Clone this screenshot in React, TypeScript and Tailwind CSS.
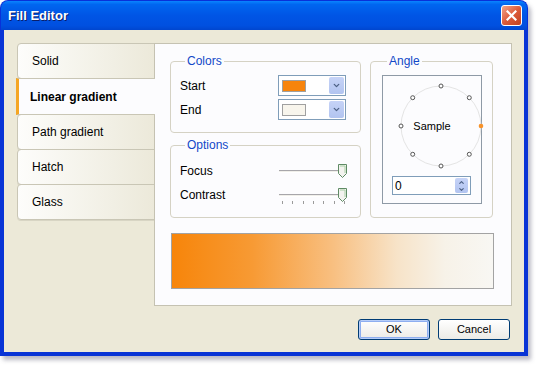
import { ChevronDown, ChevronUp } from "lucide-react";

const TABS = ["Solid", "Linear gradient", "Path gradient", "Hatch", "Glass"];

function ColorCombo({ color }: { color: string }) {
  return (
    <div className="flex h-[21px] w-[68px] items-center border border-[#7F9DB9] bg-white pl-[3px] pr-[1px]">
      <div className="h-[12px] w-[24px] border border-[#A0A0A0]" style={{ backgroundColor: color }} />
      <div className="flex-1" />
      <div className="grid h-[17px] w-[15px] place-items-center rounded-[2px] bg-gradient-to-b from-[#C6D3F7] to-[#B2C4F0] text-[#4D6185]">
        <ChevronDown className="h-[9px] w-[9px]" strokeWidth={3.5} />
      </div>
    </div>
  );
}

function Slider() {
  return (
    <div className="relative h-[14px] w-[70px]">
      <div className="absolute left-[2px] right-[4px] top-[6px] h-[3px] border-t border-[#A7A6AA] border-b border-b-white bg-[#F0EFEA]" />
      <svg className="absolute right-0 top-0" width="9" height="14" viewBox="0 0 9 14">
        <path d="M0.5 0.5 H8.5 V9.5 L4.5 13.5 L0.5 9.5 Z" fill="#F3F3EF" stroke="#5F8B65" />
        <path d="M2 2 H7 V9" fill="none" stroke="#A8CFA5" />
      </svg>
    </div>
  );
}

function AngleDial() {
  const cx = 50;
  const cy = 50;
  const r = 40;
  const dots = [0, 45, 90, 135, 180, 225, 270, 315];
  return (
    <div className="relative h-[100px] w-full">
      <svg width="100" height="100" viewBox="0 0 100 100" className="absolute left-[-1px] top-0">
        <circle cx={cx} cy={cy} r={r} fill="none" stroke="#E4E4E4" strokeWidth="1" />
        {dots.map((a) => {
          const rad = (a * Math.PI) / 180;
          const x = cx + r * Math.cos(rad);
          const y = cy - r * Math.sin(rad);
          return a === 0 ? (
            <circle key={a} cx={x} cy={y} r="2.3" fill="#F7922A" />
          ) : (
            <circle key={a} cx={x} cy={y} r="2" fill="white" stroke="#555" strokeWidth="1" />
          );
        })}
      </svg>
      <div className="absolute inset-0 flex items-center justify-center text-[11px] text-black">
        Sample
      </div>
    </div>
  );
}

function XPButton({ label, isDefault }: { label: string; isDefault?: boolean }) {
  return (
    <button
      type="button"
      className={
        "h-[21px] w-[72px] rounded-[3px] border border-[#003C74] bg-gradient-to-b from-white to-[#ECEBE6] text-[11px] text-black " +
        (isDefault ? "shadow-[inset_0_0_0_1px_#B6CDF8,inset_0_0_0_2px_#8EAEF0]" : "")
      }
    >
      {label}
    </button>
  );
}

export default function App() {
  return (
    <div className="h-[365px] w-[536px] bg-white font-['Liberation_Sans',Tahoma,sans-serif]">
      <div className="flex h-[356px] w-[528px] flex-col rounded-t-[8px] shadow-[3px_4px_4px_rgba(60,60,90,0.35)]">
        {/* title bar */}
        <div className="flex h-[30px] items-center justify-between rounded-t-[8px] border border-b-0 border-[#0831D9] bg-[linear-gradient(to_bottom,#0A84FF_0%,#0066F0_12%,#0055E5_50%,#0050E0_85%,#0046CF_100%)] pl-[7px] pr-[5px]">
          <span className="text-[13px] font-bold text-white [text-shadow:1px_1px_0_#0A1E6A]">
            Fill Editor
          </span>
          <div className="grid h-[21px] w-[21px] place-items-center rounded-[3px] border border-white bg-gradient-to-br from-[#F0A38A] via-[#DD5B3A] to-[#C2411F]">
            <svg width="11" height="11" viewBox="0 0 11 11">
              <path d="M1.5 1.5 L9.5 9.5 M9.5 1.5 L1.5 9.5" stroke="white" strokeWidth="2.2" strokeLinecap="square" />
            </svg>
          </div>
        </div>

        {/* body */}
        <div className="flex flex-1 flex-col border-x-4 border-b-4 border-[#0834D6] bg-[#ECE9D8] pl-[12px] pt-[13px]">
          <div className="flex">
            {/* tab list */}
            <div className="mt-[1px] flex w-[139px] flex-col">
              {TABS.map((t) =>
                t === "Linear gradient" ? (
                  <div
                    key={t}
                    className="relative z-10 -mt-px flex h-[37px] w-[139px] items-center border-y border-l-[3px] border-y-[#C9C6B5] border-l-[#F5A623] bg-[#FCFCFE] pl-[11px] text-[12px] font-bold text-black"
                  >
                    {t}
                  </div>
                ) : (
                  <div
                    key={t}
                    className="-mt-px ml-[1px] flex h-[36px] w-[138px] items-center rounded-l-[4px] border border-[#C9C6B5] bg-gradient-to-r from-[#FDFDFB] to-[#ECE9DA] pl-[14px] text-[12px] text-black shadow-[0_1px_0_#D8D5C4]"
                  >
                    {t}
                  </div>
                ),
              )}
            </div>

            {/* main panel */}
            <div className="-ml-px flex h-[263px] w-[358px] flex-col border border-[#C5C2B2] bg-[#FCFCFE] pl-[15px] pt-[11px]">
              <div className="flex gap-[9px]">
                <div className="flex w-[191px] flex-col gap-[6px]">
                  <fieldset className="h-[78px] rounded-[4px] border border-[#D5D2C4] pl-[9px] pr-[14px]">
                    <legend className="ml-[5px] px-[2px] text-[12px] leading-[13px] text-[#1248C8]">Colors</legend>
                    <div className="mt-[7px] flex items-center justify-between text-[12px] text-black">
                      <span>Start</span>
                      <ColorCombo color="#F7840C" />
                    </div>
                    <div className="mt-[3px] flex items-center justify-between text-[12px] text-black">
                      <span>End</span>
                      <ColorCombo color="#F8F5EC" />
                    </div>
                  </fieldset>
                  <fieldset className="h-[79px] rounded-[4px] border border-[#D5D2C4] pl-[9px] pr-[13px]">
                    <legend className="ml-[5px] px-[2px] text-[12px] leading-[13px] text-[#1248C8]">Options</legend>
                    <div className="mt-[12px] flex h-[14px] items-center justify-between text-[12px] leading-[14px] text-black">
                      <span>Focus</span>
                      <Slider />
                    </div>
                    <div className="mt-[10px] flex h-[14px] items-center justify-between text-[12px] leading-[14px] text-black">
                      <span>Contrast</span>
                      <Slider />
                    </div>
                    <div className="ml-[102px] mt-[-1px] flex w-[63px] justify-between">
                      {Array.from({ length: 7 }).map((_, i) => (
                        <div key={i} className="h-[3px] w-px bg-[#9A9A9A]" />
                      ))}
                    </div>
                  </fieldset>
                </div>

                <fieldset className="h-[163px] w-[123px] rounded-[4px] border border-[#D5D2C4] pl-[11px] pr-[10px]">
                  <legend className="ml-[5px] px-[2px] text-[12px] leading-[13px] text-[#1248C8]">Angle</legend>
                  <div className="mt-[7px] flex h-[129px] w-[100px] flex-col border border-[#8E9AA6] px-[9px]">
                    <AngleDial />
                    <div className="flex h-[19px] w-[79px] items-center border border-[#7F9DB9] bg-white pl-[2px] pr-[2px]">
                      <span className="flex-1 text-[12px] text-black">0</span>
                      <div className="flex h-[15px] w-[13px] flex-col items-center justify-center rounded-[2px] bg-gradient-to-b from-[#C6D3F7] to-[#B2C4F0] text-[#4D6185]">
                        <ChevronUp className="h-[7px] w-[7px]" strokeWidth={4} />
                        <ChevronDown className="h-[7px] w-[7px]" strokeWidth={4} />
                      </div>
                    </div>
                  </div>
                </fieldset>
              </div>

              <div className="ml-[1px] mt-[15px] h-[56px] w-[323px] border border-[#A3A3A3] bg-[linear-gradient(to_right,#F7850A_0%,#F79A34_25%,#F8BF80_50%,#F7E3C8_70%,#F7F2E8_85%,#F8F7F3_100%)]" />
            </div>
          </div>

          <div className="mt-[13px] flex justify-end gap-[8px] pr-[14px]">
            <XPButton label="OK" isDefault />
            <XPButton label="Cancel" />
          </div>
        </div>
      </div>
    </div>
  );
}
